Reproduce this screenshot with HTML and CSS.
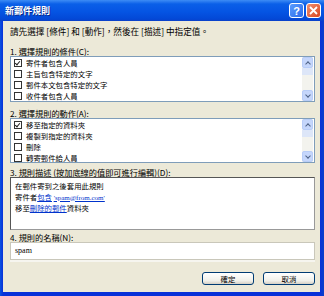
FILE: index.html
```html
<!DOCTYPE html>
<html lang="zh-Hant">
<head>
    <meta charset="UTF-8">
    <title>新郵件規則</title>
    <link rel="stylesheet" href="styles.css">
</head>
<body>
    <div class="pencere">
        <div class="baslik">
            <span class="baslik-yazi">新郵件規則</span>
            <span class="tus yardim">?</span>
            <span class="tus kapat">
                <svg width="9" height="9" viewBox="0 0 9 9"><path d="M1 1L8 8M8 1L1 8" stroke="#fff" stroke-width="1.8"/></svg>
            </span>
        </div>
        <div class="govde">
            <div class="aciklama">請先選擇 [條件] 和 [動作]，然後在 [描述] 中指定值。</div>

            <div class="etiket ilk">1. 選擇規則的條件(<u>C</u>):</div>
            <div class="liste">
                <div class="satirlar">
                    <div class="satir"><span class="kutu secili"></span>寄件者包含人員</div>
                    <div class="satir"><span class="kutu"></span>主旨包含特定的文字</div>
                    <div class="satir"><span class="kutu"></span>郵件本文包含特定的文字</div>
                    <div class="satir"><span class="kutu"></span>收件者包含人員</div>
                </div>
                <div class="kaydirma">
                    <span class="ok yukari"></span>
                    <span class="tutamak"></span>
                    <span class="bos"></span>
                    <span class="ok asagi"></span>
                </div>
            </div>

            <div class="etiket">2. 選擇規則的動作(<u>A</u>):</div>
            <div class="liste ikinci">
                <div class="satirlar">
                    <div class="satir"><span class="kutu secili"></span>移至指定的資料夾</div>
                    <div class="satir"><span class="kutu"></span>複製到指定的資料夾</div>
                    <div class="satir"><span class="kutu"></span>刪除</div>
                    <div class="satir"><span class="kutu"></span>轉寄郵件給人員</div>
                </div>
                <div class="kaydirma">
                    <span class="ok yukari"></span>
                    <span class="tutamak"></span>
                    <span class="bos"></span>
                    <span class="ok asagi"></span>
                </div>
            </div>

            <div class="etiket ucuncu">3. 規則描述 (按加底線的值即可進行編輯)(<u>D</u>):</div>
            <div class="tarif">
                <div>在郵件寄到之後套用此規則</div>
                <div>寄件者<a href="#">包含</a> <a href="#" class="eposta">'spam@from.com'</a></div>
                <div>移至<a href="#">刪除的郵件</a>資料夾</div>
            </div>

            <div class="etiket dorduncu">4. 規則的名稱(<u>N</u>):</div>
            <div class="isim">spam</div>

            <div class="dugmeler">
                <span class="dugme">確定</span>
                <span class="dugme">取消</span>
            </div>
        </div>
    </div>
</body>
</html>
```

FILE: styles.css
```css
/* reset html */
*{
    margin: 0;
    padding: 0;
    box-sizing: border-box;
}
body,html{
    width: 324px;
    height: 296px;
    overflow: hidden;
}
body{
    font-family: "Noto Sans CJK TC", "Liberation Sans", sans-serif;
    color: black;
}
.pencere{
    width: 324px;
    height: 296px;
    background: linear-gradient(to right, #0a52e0, #0831d9 3px, #0831d9 320px, #0a3fc8);
    display: flex;
    flex-direction: column;
}
.baslik{
    height: 21px;
    flex: none;
    display: flex;
    align-items: center;
    padding: 0 3px 0 5px;
    background: linear-gradient(#3d8cf5, #0a5fe8 4px, #0554e3 12px, #0348d6 19px, #0a3fc8);
}
.baslik-yazi{
    flex: 1;
    color: white;
    font-size: 9px;
    font-weight: bold;
    text-shadow: 1px 1px 0 #0a2a8a;
}
.tus{
    width: 15px;
    height: 15px;
    border: 1px solid white;
    border-radius: 3px;
    display: flex;
    align-items: center;
    justify-content: center;
    margin-left: 2px;
}
.yardim{
    background: linear-gradient(135deg, #5a9cff, #2a6bea);
    color: white;
    font: bold 11px "Liberation Sans", sans-serif;
}
.kapat{
    background: linear-gradient(135deg, #f09070, #d9461f);
}
.govde{
    flex: 1;
    margin: 0 4px 4px 3px;
    background-color: #ece9d8;
    padding: 5px 5px 0 7px;
    display: flex;
    flex-direction: column;
}
.aciklama{
    font-size: 8.6px;
    line-height: 11px;
    height: 11px;
}
.etiket{
    font-size: 8.2px;
    line-height: 10px;
    height: 10px;
    margin-top: 6px;
}
.etiket.ilk{
    margin-top: 9px;
}
.etiket.ucuncu{
    margin-top: 4px;
}
.etiket.dorduncu{
    margin-top: 2px;
}
.etiket u{
    text-decoration: underline;
}
.liste{
    height: 46px;
    background: white;
    border: 1px solid #7f9db9;
    display: flex;
    overflow: hidden;
}
.liste.ikinci{
    height: 45px;
}
.satirlar{
    flex: 1;
    padding: 0 0 0 3px;
}
.satir{
    height: 11px;
    font-size: 7.4px;
    line-height: 11px;
    display: flex;
    align-items: center;
}
.kutu{
    width: 8px;
    height: 8px;
    border: 1px solid #333;
    background: white;
    margin-right: 4px;
    position: relative;
}
.kutu.secili::after{
    content: "";
    position: absolute;
    left: 1px;
    top: 0px;
    width: 2px;
    height: 4px;
    border: solid #222;
    border-width: 0 1.5px 1.5px 0;
    transform: rotate(40deg);
}
.kaydirma{
    width: 11px;
    margin-right: 1px;
    display: flex;
    flex-direction: column;
    background: #f3f3ee;
}
.ok{
    height: 11px;
    background: #c5d6fb;
    border: 1px solid #b8cdf8;
    border-radius: 2px;
    position: relative;
}
.ok::after{
    content: "";
    position: absolute;
    left: 3px;
    width: 3px;
    height: 3px;
    border: solid #4d6185;
    border-width: 1.5px 0 0 1.5px;
}
.yukari::after{
    top: 4px;
    transform: rotate(45deg);
}
.asagi::after{
    top: 2px;
    transform: rotate(225deg);
}
.tutamak{
    height: 7px;
    background: #dde6f8;
}
.bos{
    flex: 1;
}
.tarif{
    height: 53px;
    background: white;
    border: 1px solid #555;
    border-right-color: #999;
    border-bottom-color: #999;
    padding: 3px 0 0 4px;
    font-size: 7.4px;
    line-height: 10.5px;
}
.tarif a{
    color: #0033cc;
    text-decoration: underline;
}
.tarif .eposta{
    font-family: "Liberation Serif", serif;
    font-size: 7px;
}
.isim{
    height: 18px;
    background: white;
    border: 1px solid #c9c7ba;
    box-shadow: 0 2px 0 #f6f5ef;
    padding: 0 4px;
    font-family: "Liberation Serif", serif;
    font-size: 8px;
    line-height: 16px;
}
.dugmeler{
    margin-top: 12px;
    display: flex;
    justify-content: flex-end;
    gap: 9px;
}
.dugme{
    width: 52px;
    height: 13px;
    border: 1px solid #003c74;
    border-radius: 3px;
    background: linear-gradient(#ffffff, #f0f0ea 70%, #d6d0c5);
    font-size: 7.4px;
    line-height: 11px;
    text-align: center;
}
```
